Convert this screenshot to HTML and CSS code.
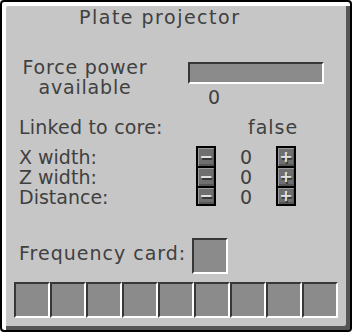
FILE: index.html
```html
<!DOCTYPE html>
<html>
<head>
<meta charset="utf-8">
<title>Plate projector</title>
<link rel="stylesheet" href="styles.css">
</head>
<body>
<div class="gui">
  <div class="title">Plate projector</div>
  <div class="power-row">
    <div class="power-label">
      <div>Force power</div>
      <div>available</div>
    </div>
    <div class="power-meter">
      <div class="bar"></div>
      <div class="power-value">0</div>
    </div>
  </div>
  <div class="link-row">
    <span class="link-label">Linked to core:</span>
    <span class="link-value">false</span>
  </div>
  <div class="settings">
    <div class="setting">
      <span class="setting-label">X width:</span>
      <div class="btn">−</div>
      <span class="setting-value">0</span>
      <div class="btn">+</div>
    </div>
    <div class="setting">
      <span class="setting-label">Z width:</span>
      <div class="btn">−</div>
      <span class="setting-value">0</span>
      <div class="btn">+</div>
    </div>
    <div class="setting">
      <span class="setting-label">Distance:</span>
      <div class="btn">−</div>
      <span class="setting-value">0</span>
      <div class="btn">+</div>
    </div>
  </div>
  <div class="freq-row">
    <span class="freq-label">Frequency card:</span>
    <div class="slot"></div>
  </div>
  <div class="inventory">
    <div class="slot"></div>
    <div class="slot"></div>
    <div class="slot"></div>
    <div class="slot"></div>
    <div class="slot"></div>
    <div class="slot"></div>
    <div class="slot"></div>
    <div class="slot"></div>
    <div class="slot"></div>
  </div>
</div>
</body>
</html>
```
FILE: styles.css
```css
html, body {
  margin: 0;
  padding: 0;
  background: #ffffff;
}
body {
  width: 352px;
  height: 332px;
  overflow: hidden;
}
.gui {
  width: 352px;
  height: 332px;
  box-sizing: border-box;
  border: 2px solid #000;
  border-radius: 4px;
  background: #c6c6c6;
  box-shadow: inset 4px 4px 0 #ffffff, inset -4px -4px 0 #555555;
  font-family: "DejaVu Sans", sans-serif;
  font-size: 19px;
  line-height: 20px;
  color: #404040;
  display: flex;
  flex-direction: column;
  white-space: nowrap;
}
.title {
  margin-top: 5px;
  padding-left: 77px;
  height: 20px;
  letter-spacing: 1.5px;
}
.power-row {
  margin-top: 30px;
  height: 50px;
  display: flex;
}
.power-label {
  margin-left: 17px;
  width: 132px;
  text-align: center;
  letter-spacing: 0.8px;
}
.power-meter {
  margin-left: 37px;
  padding-top: 5px;
}
.bar {
  width: 136px;
  height: 22px;
  box-sizing: border-box;
  background: #8b8b8b;
  border-top: 2px solid #373737;
  border-left: 2px solid #373737;
  border-bottom: 2px solid #ffffff;
  border-right: 2px solid #ffffff;
}
.power-value {
  margin-top: 3px;
  padding-left: 20px;
}
.link-row {
  margin-top: 10px;
  height: 20px;
  display: flex;
  padding-left: 17px;
}
.link-label {
  width: 229px;
  letter-spacing: 0.2px;
}
.link-value {
  letter-spacing: 1px;
}
.settings {
  margin-top: 9px;
  display: flex;
  flex-direction: column;
}
.setting {
  height: 20px;
  display: flex;
  padding-left: 17px;
}
.setting-label {
  width: 177px;
  padding-top: 1px;
}
.setting-value {
  width: 60px;
  text-align: center;
  padding-top: 1px;
}
.btn {
  width: 20px;
  height: 20px;
  box-sizing: border-box;
  border: 2px solid #000;
  border-bottom: 0;
  background: #6f6f6f;
  box-shadow: inset 1px 1px 0 #9a9a9a, inset -1px -2px 0 #575757;
  color: #e0e0e0;
  font-weight: bold;
  font-size: 16px;
  line-height: 18px;
  text-align: center;
  text-shadow: 1px 2px 0 #383838;
}
.setting:last-child .btn {
  border-bottom: 2px solid #000;
  line-height: 16px;
}
.freq-row {
  margin-top: 32px;
  height: 36px;
  display: flex;
  padding-left: 17px;
}
.freq-label {
  width: 173px;
  padding-top: 5px;
  letter-spacing: 1px;
}
.slot {
  width: 36px;
  height: 36px;
  box-sizing: border-box;
  background: #8b8b8b;
  border-top: 2px solid #373737;
  border-left: 2px solid #373737;
  border-bottom: 2px solid #ffffff;
  border-right: 2px solid #ffffff;
}
.inventory {
  margin-top: 8px;
  display: flex;
  padding-left: 12px;
}
```
